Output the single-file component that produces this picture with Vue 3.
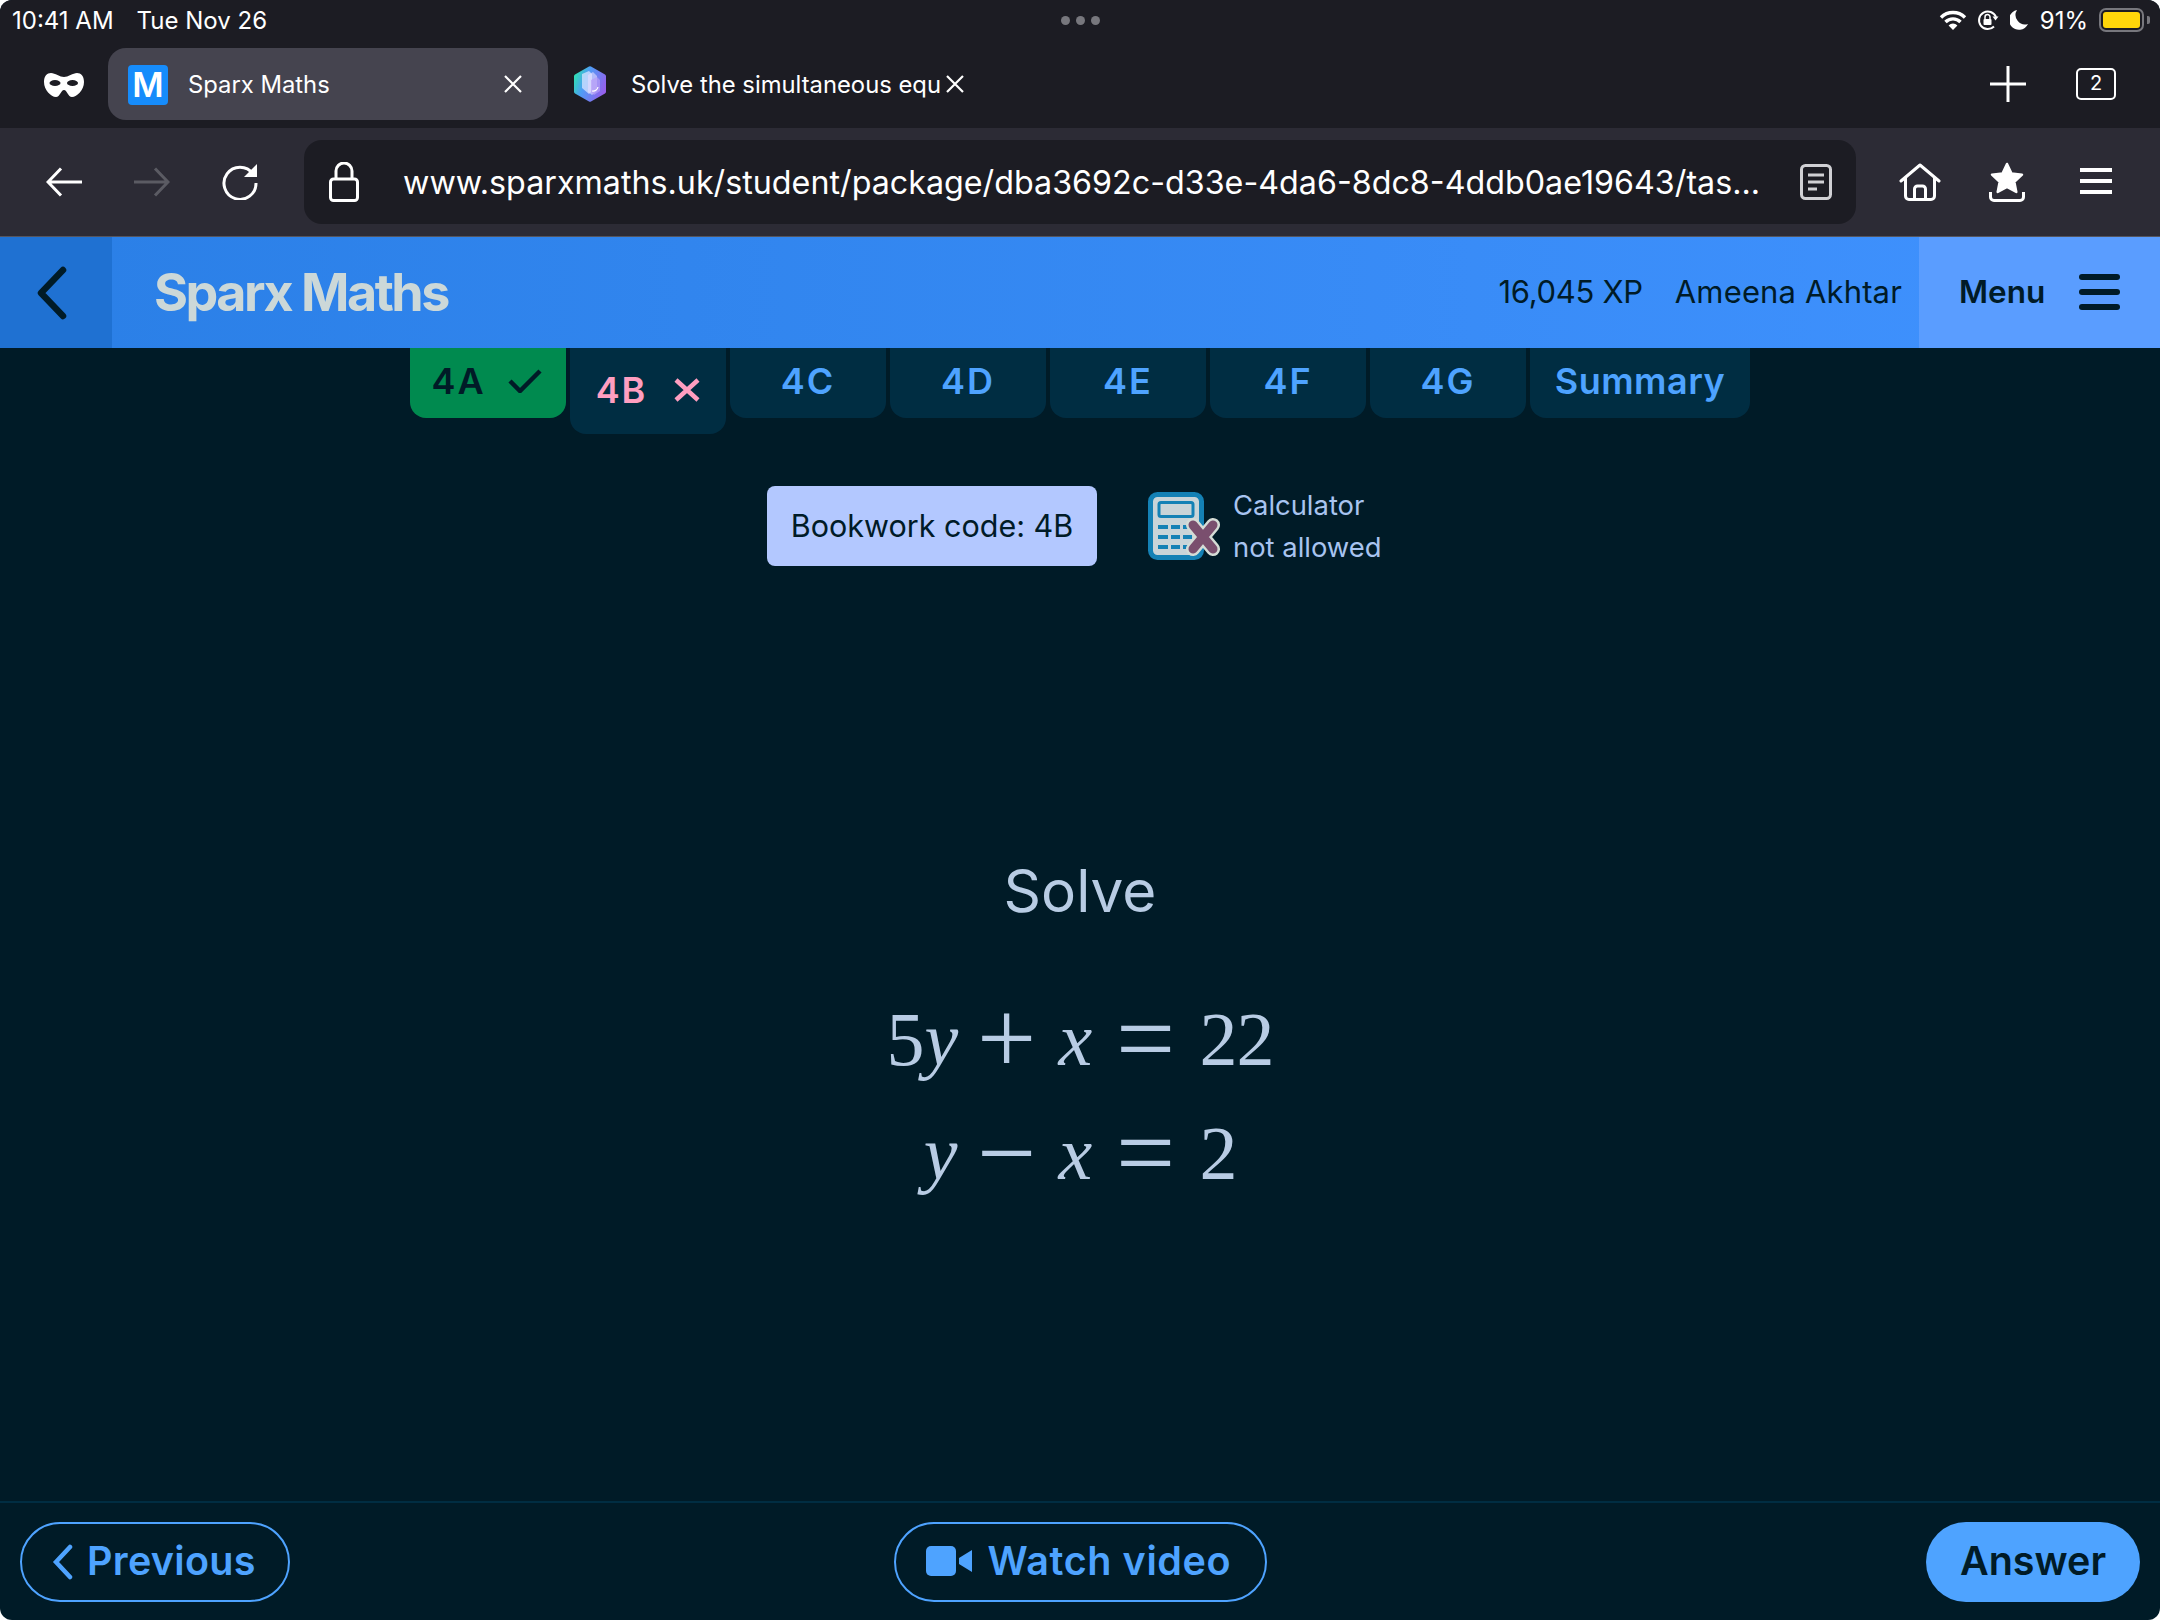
<template>
  <div class="screen">
    <!-- iPad status bar -->
    <div class="status-bar">
      <div class="status-left">
        <span>10:41 AM</span>
        <span>Tue Nov 26</span>
      </div>
      <div class="dots"><i></i><i></i><i></i></div>
      <div class="status-right">
        <svg width="28" height="20" viewBox="0 0 28 20">
          <path d="M2 7.500a17 17 0 0 1 24 0M6.500 12a10.500 10.500 0 0 1 15 0" fill="none" stroke="#fff" stroke-width="3.400"/>
          <path d="M14 20l-4.400-4.600a6.200 6.200 0 0 1 8.800 0z" fill="#fff"/>
        </svg>
        <svg class="rot-icon" width="22" height="22" viewBox="0 0 22 22">
          <path d="M17 17.500A8.800 8.800 0 1 1 19 8" fill="none" stroke="#fff" stroke-width="2"/>
          <path d="M15.500 7.500h6l-3 4z" fill="#fff"/>
          <rect x="6.500" y="10" width="8" height="6" rx="1" fill="#fff"/>
          <path d="M8 10V8a2.500 2.500 0 0 1 5 0v2" fill="none" stroke="#fff" stroke-width="1.500"/>
        </svg>
        <svg class="moon-icon" width="18" height="20" viewBox="0 0 18 20">
          <path d="M7 0A10 10 0 1 0 18 14 9.500 9.500 0 0 1 7 0z" fill="#fff"/>
        </svg>
        <span class="battery-text">91%</span>
        <div class="battery"><div class="battery-fill"></div></div>
        <div class="battery-nub"></div>
      </div>
    </div>

    <!-- browser tabs -->
    <div class="tab-strip">
      <svg class="mask" width="40" height="24" viewBox="0 0 40 24">
        <path fill="#fff" d="M7 0C11 0 16 4 20 4S29 0 33 0C37 0 40 3 40 9 40 17 33 24 28 24 24 24 23 17 20 17S16 24 12 24C7 24 0 17 0 9 0 3 3 0 7 0z"/>
        <ellipse cx="11" cy="10" rx="5.500" ry="3" fill="#1c1c23"/>
        <ellipse cx="28.500" cy="10" rx="5.500" ry="3" fill="#1c1c23"/>
      </svg>
      <div class="browser-tab active">
        <div class="favicon">M</div>
        <span class="tab-title">Sparx Maths</span>
        <svg class="close-x" width="20" height="20" viewBox="0 0 20 20">
          <path d="M2 2l16 16M18 2L2 18" stroke="#fff" stroke-width="2.200" fill="none"/>
        </svg>
      </div>
      <div class="browser-tab">
        <svg width="32" height="36" viewBox="0 0 32 36">
          <defs>
            <linearGradient id="gem" x1="0" y1="0.300" x2="1" y2="0.700">
              <stop offset="0" stop-color="#2fe0b4" />
              <stop offset="0.350" stop-color="#4f9cf5" />
              <stop offset="1" stop-color="#9a5cec" />
            </linearGradient>
          </defs>
          <path d="M15 .6a2 2 0 0 1 2 0l14 8a2 2 0 0 1 1 1.700v15.400a2 2 0 0 1-1 1.700l-14 8a2 2 0 0 1-2 0l-14-8a2 2 0 0 1-1-1.700V10.300a2 2 0 0 1 1-1.700z" fill="url(#gem)"/>
          <path d="M8 8l7-3 3 3v17l-3 3-7-6z" fill="#d8e6ff" opacity="0.75"/>
          <path d="M14 9l5-3 4 4v15l-5 4-4-3z" fill="#e6dcff" opacity="0.6"/>
          <path d="M17 14l6-3 3 3v11l-6 4-3-3z" fill="#b79cf7" opacity="0.7"/>
          <path d="M18 25a5 5 0 0 0 6-4" fill="none" stroke="#fff" stroke-width="1.200"/>
        </svg>
        <span class="tab-title second">Solve the simultaneous equ</span>
        <svg width="18" height="20" viewBox="0 0 18 20">
          <path d="M1 2l16 16M17 2L1 18" stroke="#fff" stroke-width="2.200" fill="none"/>
        </svg>
      </div>
      <div class="strip-right">
        <svg width="36" height="36" viewBox="0 0 36 36">
          <path d="M18 0v36M0 18h36" stroke="#fff" stroke-width="3" fill="none"/>
        </svg>
        <div class="tab-count">2</div>
      </div>
    </div>

    <!-- browser toolbar -->
    <div class="toolbar">
      <svg class="arrow" width="36" height="30" viewBox="0 0 36 30">
        <path d="M36 15H2M15 1.500L2 15l13 13.500" stroke="#fff" stroke-width="3" fill="none"/>
      </svg>
      <svg class="arrow" width="36" height="30" viewBox="0 0 36 30">
        <path d="M0 15h34M21 1.500L34 15 21 28.500" stroke="#5b5b63" stroke-width="3" fill="none"/>
      </svg>
      <svg class="arrow" width="36" height="36" viewBox="0 0 36 36">
        <path d="M31 10A16 16 0 1 0 34 19" stroke="#fff" stroke-width="3" fill="none"/>
        <path d="M35 0v13H22z" fill="#fff"/>
      </svg>
      <div class="address">
        <svg width="30" height="40" viewBox="0 0 30 40">
          <rect x="1.500" y="17" width="27" height="21.500" rx="3" fill="none" stroke="#fff" stroke-width="3"/>
          <path d="M7 17V9a8 8 0 0 1 16 0v8" fill="none" stroke="#fff" stroke-width="3"/>
        </svg>
        <span class="url">www.sparxmaths.uk/student/package/dba3692c-d33e-4da6-8dc8-4ddb0ae19643/tas...</span>
        <svg width="32" height="36" viewBox="0 0 32 36">
          <rect x="1.500" y="1.500" width="29" height="33" rx="4" fill="none" stroke="#d0d0d4" stroke-width="3"/>
          <path d="M8 11h16M8 18h16M8 25h9" stroke="#d0d0d4" stroke-width="3" fill="none"/>
        </svg>
      </div>
      <svg class="home" width="42" height="38" viewBox="0 0 42 38">
        <path d="M2 18L21 2l19 16M6.500 15v18a3.500 3.500 0 0 0 3.500 3.500h22a3.500 3.500 0 0 0 3.500-3.500V15" fill="none" stroke="#fff" stroke-width="3" stroke-linecap="round" stroke-linejoin="round"/>
        <path d="M15.500 36V26a3 3 0 0 1 3-3h5a3 3 0 0 1 3 3v10" fill="none" stroke="#fff" stroke-width="3"/>
      </svg>
      <svg class="star" width="36" height="40" viewBox="0 0 36 40">
        <path d="M18 2l4.500 9.500 10.500 1.200-7.700 7.100 2 10.200L18 25l-9.300 5 2-10.200L3 12.700l10.500-1.200z" fill="#fff" stroke="#fff" stroke-width="2.500" stroke-linejoin="round"/>
        <path d="M1.500 30v5a3.500 3.500 0 0 0 3.500 3.500h26a3.500 3.500 0 0 0 3.500-3.500v-5" fill="none" stroke="#fff" stroke-width="3"/>
      </svg>
      <div class="burger"><i></i><i></i><i></i></div>
    </div>

    <!-- sparx header -->
    <header class="site-header">
      <div class="back-block">
        <svg width="32" height="54" viewBox="0 0 32 54">
          <path d="M27 4L5 27l22 23" fill="none" stroke="#001b27" stroke-width="6.500" stroke-linecap="round" stroke-linejoin="round"/>
        </svg>
      </div>
      <div class="logo">Sparx Maths</div>
      <div class="user-info">
        <span class="xp">16,045 XP</span>
        <span class="name">Ameena Akhtar</span>
      </div>
      <div class="menu-block">
        <span>Menu</span>
        <div class="menu-bars"><i></i><i></i><i></i></div>
      </div>
    </header>

    <main class="content">
      <div class="task-tabs">
        <div v-for="t in tasks" :key="t.label" class="task-tab" :class="t.cls">
          <span>{{ t.label }}</span>
          <svg v-if="t.cls === 'done'" width="34" height="24" viewBox="0 0 34 24">
            <path d="M2 12l10 10L32 2" fill="none" stroke="#001b27" stroke-width="4.500"/>
          </svg>
          <svg v-if="t.cls === 'wrong'" width="26" height="24" viewBox="0 0 26 24">
            <path d="M2 2l22 20M24 2L2 22" fill="none" stroke="#ff9ec0" stroke-width="4.500"/>
          </svg>
        </div>
      </div>

      <div class="info-row">
        <div class="bookwork">Bookwork code: 4B</div>
        <svg class="calc" width="72" height="68" viewBox="0 0 72 68">
          <rect x="2.500" y="2.500" width="51" height="63" rx="7" fill="#c9d4d8" stroke="#1481b5" stroke-width="5"/>
          <rect x="11" y="10.500" width="34" height="14" rx="2" fill="#c9d4d8" stroke="#1481b5" stroke-width="3"/>
          <path d="M10 35h10M23 35h9M35 35h9M10 45h10M23 45h9M35 45h9M10 55h10M23 55h9M35 55h9" stroke="#1481b5" stroke-width="4" fill="none"/>
          <path d="M45 33l20 24M65 33L45 57" stroke="#d5dcd6" stroke-width="14" stroke-linecap="round" fill="none"/>
          <path d="M45 33l20 24M65 33L45 57" stroke="#7a4f6e" stroke-width="9" stroke-linecap="round" fill="none"/>
        </svg>
        <div class="calc-text">Calculator<br />not allowed</div>
      </div>

      <div class="question">
        <div class="solve">Solve</div>
        <div class="math">
          <template v-for="(row, i) in equations" :key="i">
            <span class="lhs">{{ row.coef }}<em>y</em></span>
            <span class="op">{{ row.op }}</span>
            <em class="var">x</em>
            <span class="op">=</span>
            <span class="rhs">{{ row.rhs }}</span>
          </template>
        </div>
      </div>
    </main>

    <footer class="footer">
      <button class="pill prev">
        <svg width="21" height="36" viewBox="0 0 21 36">
          <path d="M18 3L4 18l14 15" fill="none" stroke="#4ea3ff" stroke-width="4.500" stroke-linecap="round"/>
        </svg>
        Previous
      </button>
      <button class="pill video">
        <svg width="46" height="30" viewBox="0 0 46 30">
          <rect width="30" height="30" rx="5" fill="#4ea3ff"/>
          <path d="M33 12l13-8v22l-13-8z" fill="#4ea3ff"/>
        </svg>
        Watch video
      </button>
      <button class="pill answer">Answer</button>
    </footer>
  </div>
</template>

<script setup>
const tasks = [
  { label: '4A', cls: 'done' },
  { label: '4B', cls: 'wrong' },
  { label: '4C', cls: '' },
  { label: '4D', cls: '' },
  { label: '4E', cls: '' },
  { label: '4F', cls: '' },
  { label: '4G', cls: '' },
  { label: 'Summary', cls: 'summary' }
]

const equations = [
  { coef: '5', op: '+', rhs: '22' },
  { coef: '', op: '−', rhs: '2' }
]
</script>

<style>
html,
body {
  margin: 0;
  background: #fff;
}
</style>

<style scoped>
.screen {
  width: 2160px;
  height: 1620px;
  display: flex;
  flex-direction: column;
  overflow: hidden;
  border-radius: 12px;
  background: #001b27;
  font-family: Inter, "Liberation Sans", sans-serif;
}

.status-bar {
  height: 48px;
  padding: 0 10px 8px 12px;
  box-sizing: border-box;
  display: grid;
  grid-template-columns: 1fr auto 1fr;
  align-items: center;
  background: #1c1c23;
  color: #fff;
  font-size: 24px;
}
.status-left {
  display: flex;
  gap: 23px;
}
.dots {
  display: flex;
  gap: 6px;
  margin-left: -2px;
}
.dots i {
  width: 9px;
  height: 9px;
  border-radius: 50%;
  background: #77777d;
}
.status-right {
  display: flex;
  align-items: center;
  justify-content: flex-end;
}
.rot-icon {
  margin-left: 10px;
}
.moon-icon {
  margin-left: 11px;
}
.battery-text {
  margin-left: 12px;
}
.battery {
  width: 45px;
  height: 24px;
  margin-left: 11px;
  padding: 2px;
  box-sizing: border-box;
  border: 2.500px solid #77777d;
  border-radius: 7px;
}
.battery-fill {
  height: 100%;
  width: 100%;
  background: #ffd60a;
  border-radius: 3px;
}
.battery-nub {
  width: 3px;
  height: 8px;
  margin-left: 3px;
  background: #77777d;
  border-radius: 0 2px 2px 0;
}

.tab-strip {
  height: 80px;
  display: flex;
  align-items: flex-start;
  padding: 0 44px;
  box-sizing: border-box;
  background: #1c1c23;
  color: #fff;
}
.mask {
  margin: 25px 24px 0 0;
}
.browser-tab {
  height: 72px;
  display: flex;
  align-items: center;
  padding-left: 26px;
  gap: 25px;
}
.browser-tab.active {
  width: 440px;
  padding: 0 25px 0 20px;
  box-sizing: border-box;
  gap: 20px;
  background: #45444f;
  border-radius: 18px;
}
.favicon {
  width: 40px;
  height: 40px;
  margin-top: 2px;
  background: #168cfb;
  border-radius: 4px;
  color: #fff;
  font-size: 34px;
  font-weight: 600;
  line-height: 40px;
  text-align: center;
}
.tab-title {
  flex: 1;
  font-size: 23.800px;
}
.tab-title.second {
  margin-right: -20px;
}
.strip-right {
  margin-left: auto;
  height: 72px;
  display: flex;
  align-items: center;
  gap: 50px;
}
.tab-count {
  width: 40px;
  height: 32px;
  box-sizing: border-box;
  border: 2.500px solid #fff;
  border-radius: 5px;
  font-size: 20px;
  line-height: 27px;
  text-align: center;
}

.toolbar {
  height: 108px;
  display: flex;
  align-items: center;
  padding-left: 46px;
  background: #2c2b35;
}
.arrow {
  margin-right: 52px;
}
.arrow:nth-child(3) {
  margin-right: 46px;
}
.address {
  width: 1552px;
  height: 84px;
  display: flex;
  align-items: center;
  padding: 0 24px 0 25px;
  box-sizing: border-box;
  background: #1c1c23;
  border-radius: 18px;
}
.url {
  flex: 1;
  margin-left: 44px;
  color: #fff;
  font-size: 32.250px;
  white-space: nowrap;
}
.home {
  margin-left: 43px;
}
.star {
  margin-left: 48px;
}
.burger {
  margin-left: 55px;
  width: 32px;
  display: flex;
  flex-direction: column;
  gap: 7.500px;
  margin-top: -2px;
}
.burger i {
  height: 3.500px;
  background: #fff;
}

.site-header {
  height: 112px;
  flex-shrink: 0;
  display: flex;
  align-items: stretch;
  border-top: 1px solid #55555e;
  box-sizing: border-box;
  background: linear-gradient(90deg, #2a7fe6, #4092ff);
  color: #001b27;
  font-size: 31px;
}
.back-block {
  width: 112px;
  display: flex;
  align-items: center;
  padding-left: 36px;
  box-sizing: border-box;
  background: #1f71d2;
}
.logo {
  flex: 1;
  padding-left: 42px;
  align-self: center;
  color: #ccd8d8;
  font-size: 52px;
  font-weight: 700;
  letter-spacing: -2.500px;
}
.user-info {
  display: flex;
  align-items: center;
  gap: 32px;
  padding: 0 17px 2px 0;
}
.xp {
  letter-spacing: -0.300px;
}
.name {
  letter-spacing: 0.150px;
}
.menu-block {
  width: 241px;
  display: flex;
  align-items: center;
  padding: 0 40px 2px;
  box-sizing: border-box;
  justify-content: space-between;
  background: #5a9dff;
  font-size: 31.500px;
  font-weight: 600;
}
.menu-bars {
  width: 41px;
  display: flex;
  flex-direction: column;
  gap: 9px;
}
.menu-bars i {
  height: 6px;
  border-radius: 3px;
  background: #001b27;
}

.content {
  flex: 1;
  display: flex;
  flex-direction: column;
  align-items: center;
}
.task-tabs {
  display: flex;
  align-items: flex-start;
  gap: 4px;
}
.task-tab {
  width: 156px;
  height: 70px;
  display: flex;
  align-items: center;
  justify-content: center;
  gap: 22px;
  padding-bottom: 4px;
  box-sizing: border-box;
  background: #002d42;
  border-radius: 0 0 16px 16px;
  color: #4ea3ff;
  font-size: 36px;
  font-weight: 600;
  letter-spacing: 2px;
}
.task-tab.done {
  padding-right: 3px;
  background: #008a4f;
  color: #001b27;
}
.task-tab.wrong {
  height: 86px;
  padding-bottom: 2px;
  gap: 27px;
  color: #ff9ec0;
}
.task-tab.summary {
  width: 220px;
  letter-spacing: 0.500px;
}

.info-row {
  margin-top: 50px;
  display: flex;
  align-items: center;
}
.bookwork {
  width: 330px;
  height: 80px;
  border-radius: 8px;
  background: #b3c8ff;
  color: #001b27;
  font-size: 30.500px;
  line-height: 80px;
  text-align: center;
}
.calc {
  margin-left: 51px;
}
.calc-text {
  width: 160px;
  margin-left: 13px;
  color: #a8c4f0;
  font-size: 27.400px;
  line-height: 42px;
  white-space: nowrap;
}

.question {
  margin-top: 287px;
  display: flex;
  flex-direction: column;
  align-items: center;
  color: #b8cce4;
}
.solve {
  font-size: 58.500px;
  line-height: 72px;
}
.math {
  margin: 55px 4px 0 0;
  display: grid;
  grid-template-columns: 71px 98px 36px 108px 70px;
  grid-auto-rows: 114px;
  align-items: center;
  font-family: "Liberation Serif", serif;
  font-size: 76px;
}
.lhs {
  text-align: right;
  white-space: nowrap;
}
.var {
  padding-left: 3px;
}
.op {
  text-align: center;
  font-size: 105px;
  line-height: 114px;
}
.rhs {
  letter-spacing: -1px;
}

.footer {
  height: 119px;
  flex-shrink: 0;
  display: grid;
  grid-template-columns: 1fr auto 1fr;
  align-items: center;
  padding: 0 20px;
  box-sizing: border-box;
  border-top: 2px solid #002d42;
}
.pill {
  width: 270px;
  height: 80px;
  display: flex;
  align-items: center;
  gap: 14px;
  padding: 0 0 2px 30px;
  box-sizing: border-box;
  background: none;
  border: 2px solid #4ea3ff;
  border-radius: 40px;
  color: #4ea3ff;
  font-family: Inter, "Liberation Sans", sans-serif;
  font-size: 39.500px;
  font-weight: 600;
  letter-spacing: 0.300px;
}
.pill.prev svg {
  margin-top: 2px;
}
.pill.video {
  width: 373px;
  gap: 16px;
  letter-spacing: 0.600px;
}
.pill.answer {
  width: 214px;
  justify-self: end;
  justify-content: center;
  padding-left: 0;
  background: #4ea3ff;
  border: none;
  color: #001b27;
  letter-spacing: 0;
}
</style>
